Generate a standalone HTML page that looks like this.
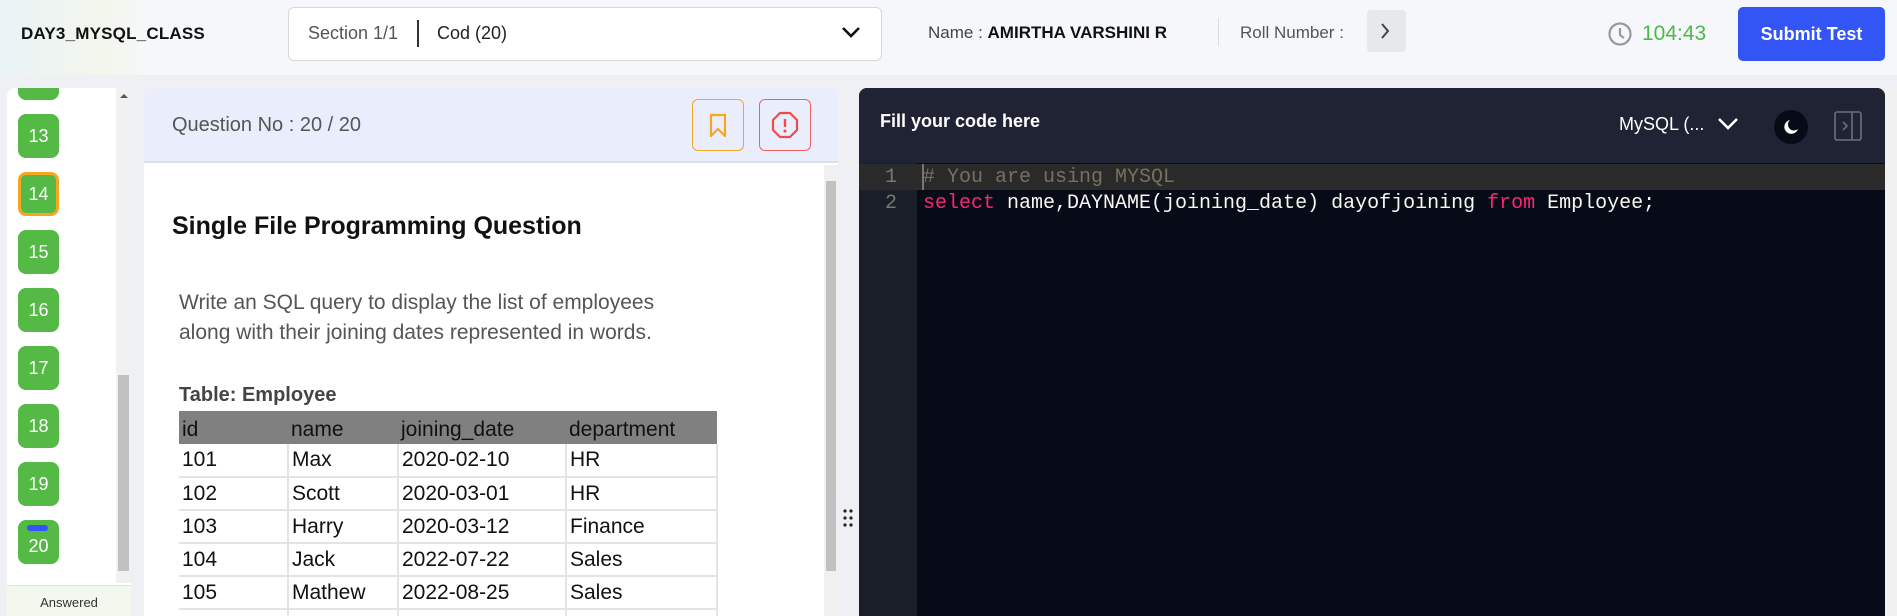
<!DOCTYPE html>
<html><head><meta charset="utf-8"><style>
*{box-sizing:border-box;margin:0;padding:0}
body{width:1897px;height:616px;overflow:hidden;background:#eef0f4;font-family:"Liberation Sans",sans-serif;position:relative}
.a{position:absolute}
.hdr{left:0;top:0;width:1897px;height:75px;background:#f6f7fb;overflow:hidden}
.btn{position:absolute;left:11px;width:41px;height:44px;border-radius:8px;background:#54b945;color:#fff;font-size:18px;display:flex;align-items:center;justify-content:center}
td{height:33px;border-right:2px solid #e4e4e4;border-bottom:2px solid #e4e4e4;padding-left:3px;font-size:21px;color:#111}
th{height:33px;text-align:left;font-weight:normal;padding-left:3px;padding-top:4px;font-size:21px;color:#111;background:#808080}
.mono{font-family:"Liberation Mono",monospace;font-size:20px}
</style></head><body>
<div class="a hdr">
 <div class="a" style="left:0;top:0;width:150px;height:75px;background:linear-gradient(90deg,#e9f3f6,#f3f6ec 70%,#f6f7fb)"></div>
 <div class="a" style="left:21px;top:24px;font-size:17px;color:#111;font-weight:bold;letter-spacing:0.2px">DAY3_MYSQL_CLASS</div>
 <div class="a" style="left:288px;top:7px;width:594px;height:54px;background:#fff;border:1px solid #d8d8d8;border-radius:6px"></div>
 <div class="a" style="left:308px;top:23px;font-size:18px;color:#555">Section 1/1</div>
 <div class="a" style="left:417px;top:20px;width:2px;height:27px;background:#333"></div>
 <div class="a" style="left:437px;top:23px;font-size:18px;color:#222">Cod (20)</div>
 <svg class="a" style="left:840px;top:24px" width="22" height="16"><path d="M3 4l8 8 8-8" fill="none" stroke="#111" stroke-width="2.6"/></svg>
 <div class="a" style="left:928px;top:23px;font-size:17px;color:#444">Name : <b style="color:#111">AMIRTHA VARSHINI R</b></div>
 <div class="a" style="left:1218px;top:18px;width:1px;height:28px;background:#ddd"></div>
 <div class="a" style="left:1240px;top:23px;font-size:17px;color:#555">Roll Number :</div>
 <div class="a" style="left:1367px;top:10px;width:39px;height:42px;background:#e6e8ec;border-radius:4px"></div>
 <svg class="a" style="left:1378px;top:21px" width="14" height="20"><path d="M4 3l6 7-6 7" fill="none" stroke="#444" stroke-width="2"/></svg>
 <svg class="a" style="left:1607px;top:21px" width="26" height="26"><circle cx="13" cy="13" r="10.5" fill="none" stroke="#999" stroke-width="2.2"/><path d="M13 7v7l4 3" fill="none" stroke="#999" stroke-width="2.2"/></svg>
 <div class="a" style="left:1642px;top:22px;font-size:21px;color:#4db84a">104:43</div>
 <div class="a" style="left:1738px;top:7px;width:147px;height:54px;background:#3355f6;border-radius:5px;color:#fff;font-size:18px;font-weight:bold;display:flex;align-items:center;justify-content:center">Submit Test</div>
</div>

<div class="a" style="left:7px;top:88px;width:124px;height:528px;background:#fff;border-radius:8px 8px 0 0;overflow:hidden">
 <div class="btn" style="top:-32px"></div>
 <div class="btn" style="top:26px">13</div>
 <div class="btn" style="top:84px;border:3px solid #f5a623">14</div>
 <div class="btn" style="top:142px">15</div>
 <div class="btn" style="top:200px">16</div>
 <div class="btn" style="top:258px">17</div>
 <div class="btn" style="top:316px">18</div>
 <div class="btn" style="top:374px">19</div>
 <div class="btn" style="top:432px;padding-top:8px">20<div class="a" style="left:9px;top:5px;width:21px;height:6px;border-radius:3px;background:#3355f6"></div></div>
 <div class="a" style="left:109px;top:0;width:15px;height:495px;background:#f1f1f1"></div>
 <div class="a" style="left:111px;top:287px;width:11px;height:196px;background:#c1c1c1"></div>
 <div class="a" style="left:113px;top:6px;width:0;height:0;border:4px solid transparent;border-bottom-color:#555;border-top:0"></div>
 <div class="a" style="left:0;top:497px;width:124px;height:31px;background:#f3f8ef;border-top:1px solid #e3e3e3;font-size:13px;color:#333;text-align:center;padding-top:9px">Answered</div>
</div>

<div class="a" style="left:144px;top:88px;width:694px;height:528px;background:#fff;border-radius:8px 8px 0 0;overflow:hidden">
 <div class="a" style="left:0;top:0;width:694px;height:75px;background:#eaedfb;border-bottom:2px solid #dcdfe8"></div>
 <div class="a" style="left:28px;top:26px;font-size:20px;color:#555">Question No : 20 / 20</div>
 <div class="a" style="left:548px;top:11px;width:52px;height:52px;border:1.5px solid #f5a623;border-radius:6px"></div>
 <svg class="a" style="left:563px;top:25px" width="22" height="26"><path d="M4 2h14v21l-7-7-7 7z" fill="none" stroke="#f5a623" stroke-width="2.2" stroke-linejoin="round"/></svg>
 <div class="a" style="left:615px;top:11px;width:52px;height:52px;border:1.5px solid #f06262;border-radius:6px"></div>
 <svg class="a" style="left:627px;top:23px" width="28" height="28"><path d="M9 2h10l7 7v10l-7 7H9l-7-7V9z" fill="none" stroke="#ef4b4b" stroke-width="2.2" stroke-linejoin="round"/><path d="M14 8v8" stroke="#ef4b4b" stroke-width="2.4"/><circle cx="14" cy="20" r="1.5" fill="#ef4b4b"/></svg>
 <div class="a" style="left:680px;top:77px;width:14px;height:451px;background:#f1f1f1"></div>
 <div class="a" style="left:682px;top:93px;width:10px;height:390px;background:#c1c1c1"></div>
 <div class="a" style="left:28px;top:124px;font-size:25px;font-weight:bold;color:#111">Single File Programming Question</div>
 <div class="a" style="left:35px;top:200px;font-size:21px;line-height:30px;color:#555">Write an SQL query to display the list of employees<br>along with their joining dates represented in words.</div>
 <div class="a" style="left:35px;top:296px;font-size:20px;font-weight:bold;color:#444">Table: Employee</div>
 <table class="a" style="left:35px;top:323px;border-collapse:collapse;width:539px">
  <tr><th style="width:109px">id</th><th style="width:110px">name</th><th style="width:168px">joining_date</th><th>department</th></tr>
  <tr><td>101</td><td>Max</td><td>2020-02-10</td><td>HR</td></tr>
  <tr><td>102</td><td>Scott</td><td>2020-03-01</td><td>HR</td></tr>
  <tr><td>103</td><td>Harry</td><td>2020-03-12</td><td>Finance</td></tr>
  <tr><td>104</td><td>Jack</td><td>2022-07-22</td><td>Sales</td></tr>
  <tr><td>105</td><td>Mathew</td><td>2022-08-25</td><td>Sales</td></tr>
  <tr><td></td><td></td><td></td><td></td></tr>
 </table>
</div>

<svg class="a" style="left:843px;top:508px" width="10" height="20"><g fill="#222"><circle cx="2" cy="3" r="1.6"/><circle cx="8" cy="3" r="1.6"/><circle cx="2" cy="10" r="1.6"/><circle cx="8" cy="10" r="1.6"/><circle cx="2" cy="17" r="1.6"/><circle cx="8" cy="17" r="1.6"/></g></svg>

<div class="a" style="left:859px;top:88px;width:1026px;height:528px;background:#070b17;border-radius:8px 8px 0 0;overflow:hidden">
 <div class="a" style="left:0;top:0;width:1026px;height:75px;background:#1f2333"></div>
 <div class="a" style="left:21px;top:23px;font-size:18px;font-weight:bold;color:#fff">Fill your code here</div>
 <div class="a" style="left:760px;top:26px;font-size:18px;color:#fff">MySQL (...</div>
 <svg class="a" style="left:858px;top:29px" width="22" height="14"><path d="M2 2l9 9 9-9" fill="none" stroke="#fff" stroke-width="2.6"/></svg>
 <div class="a" style="left:915px;top:22px;width:34px;height:34px;border-radius:50%;background:#070b17"></div>
 <svg class="a" style="left:924px;top:31px" width="16" height="16"><path d="M7 1a7 7 0 1 0 8 9 6 6 0 0 1-8-9z" fill="#fff"/></svg>
 <svg class="a" style="left:975px;top:23px" width="30" height="32"><rect x="1" y="1" width="26" height="28" rx="2" fill="none" stroke="#6b6f7c" stroke-width="1.6"/><path d="M18 1v28" stroke="#6b6f7c" stroke-width="1.6"/><path d="M9 11l4 4-4 4" fill="none" stroke="#6b6f7c" stroke-width="1.6"/></svg>
 <div class="a" style="left:0;top:75px;width:58px;height:453px;background:#1a1e29"></div>
 <div class="a" style="left:0;top:76px;width:1026px;height:26px;background:#2a2a2a"></div>
 <div class="a" style="left:63px;top:76px;width:2px;height:26px;background:#777"></div>
 <div class="a mono" style="left:26px;top:77px;color:#777;line-height:26px">1<br>2</div>
 <div class="a mono" style="left:64px;top:77px;line-height:26px;color:#f8f8f2;white-space:pre"><span style="color:#75715e"># You are using MYSQL</span>
<span style="color:#f92672">select</span> name,DAYNAME(joining_date) dayofjoining <span style="color:#f92672">from</span> Employee;</div>
</div>
<div class="a" style="left:1885px;top:88px;width:12px;height:528px;background:#f1f1f1"></div>
</body></html>
